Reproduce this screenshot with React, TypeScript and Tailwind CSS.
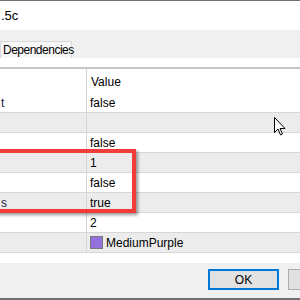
export default function App() {
  const rows = [
    { label: "t", value: "false", gray: false },
    { label: "", value: "", gray: true },
    { label: "", value: "false", gray: false },
    { label: "", value: "1", gray: true },
    { label: "", value: "false", gray: false },
    { label: "s", value: "true", gray: true },
    { label: "", value: "2", gray: false },
    { label: "", value: "MediumPurple", gray: true, swatch: true },
  ];

  return (
    <div className="relative w-[300px] h-[300px] overflow-hidden bg-white text-[12px] text-black font-['Liberation_Sans',Arial,sans-serif]">
      {/* window top edge */}
      <div className="h-px bg-[#6f6f6f]" />
      {/* title */}
      <div className="h-[29px] flex items-center pl-px text-[13px]">.5c</div>
      {/* tab strip */}
      <div className="h-[28px] bg-[#f0f0f0] flex items-end">
        <div className="h-[17px] w-[72px] bg-[#f7f7f7] border border-b-0 border-[#d9d9d9] flex items-center pl-[2px] text-[12px] tracking-[-0.5px] leading-none">
          Dependencies
        </div>
      </div>
      <div className="h-[9px] bg-white" />
      {/* property grid */}
      <div className="h-[2px] bg-[#c6c6c6]" />
      <div className="h-[24px] flex">
        <div className="w-[87px] border-r border-[#d6d6d6]" />
        <div className="flex items-center pl-[4px] pt-[2px]">Value</div>
      </div>
      {rows.map((r, i) => (
        <div
          key={i}
          className={`h-[20px] flex border-b border-[#d6d6d6] ${r.gray ? "bg-[#ececec]" : "bg-white"}`}
        >
          <div className="w-[87px] border-r border-[#d6d6d6] flex items-center pl-[1px] text-[#1a1a40]">
            {r.label}
          </div>
          <div className="flex items-center pl-[3px] gap-[3px]">
            {r.swatch && (
              <span className="w-[13px] h-[13px] bg-[#9370db] border border-[#7a7a7a]" />
            )}
            {r.value}
          </div>
        </div>
      ))}
      <div className="h-[10px] bg-white" />
      {/* button bar */}
      <div className="h-[35px] bg-[#f0f0f0] flex pl-[208px] pt-[6px] gap-[9px]">
        <div className="shrink-0 w-[71px] h-[21px] border-2 border-[#0078d7] bg-[#e1e1e1] flex items-center justify-center">
          OK
        </div>
        <div className="shrink-0 w-[73px] h-[21px] border border-[#adadad] bg-[#e1e1e1]" />
      </div>
      <div className="h-[2px] bg-[#6f6f6f]" />

      {/* red highlight annotation */}
      <div className="absolute left-[-10px] top-[149px] w-[146px] h-[64px] border-[4px] border-[#f23b3b] shadow-[2px_2px_3px_rgba(0,0,0,0.4)]" />

      {/* mouse cursor */}
      <svg className="absolute left-[274px] top-[117px]" width="12" height="19" viewBox="0 0 12 19">
        <path d="M0.5 0.5 L0.5 15.5 L4 12 L6.5 18 L8.5 17 L6 11.5 L11 11.5 Z" fill="#fff" stroke="#000" strokeWidth="1" />
      </svg>
    </div>
  );
}
